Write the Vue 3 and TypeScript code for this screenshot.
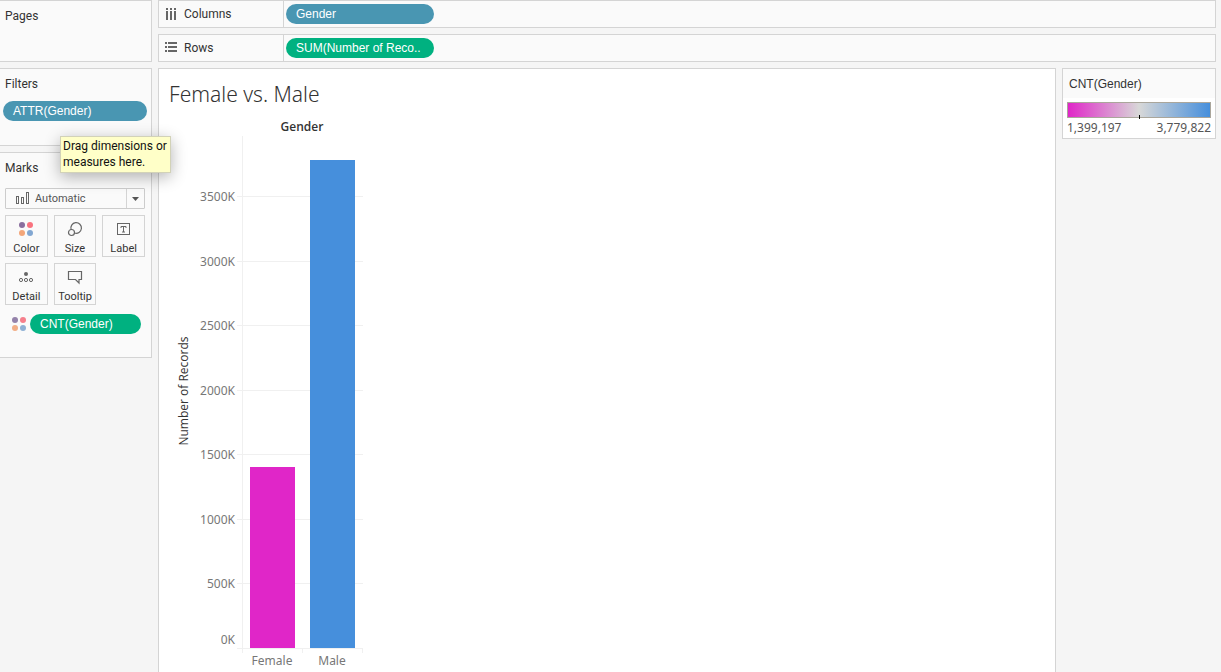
<script setup lang="ts">
import { ref } from 'vue'

interface Bar { label: string; value: number; color: string }

const markType = ref('Automatic')
const bars: Bar[] = [
  { label: 'Female', value: 1399197, color: '#e026c8' },
  { label: 'Male', value: 3779822, color: '#468fdc' },
]
const ticks = [0, 500, 1000, 1500, 2000, 2500, 3000, 3500]

const baseline = 538
const unitsPerPixel = 7752
const axisX = 73
const step = 60
const barWidth = 45

const barHeight = (value: number): number => Math.ceil(value / unitsPerPixel)
const tickY = (tick: number): number => baseline - Math.ceil((tick * 1000) / unitsPerPixel)
const labelY = (tick: number): number => (tick === 0 ? baseline - 4 : tickY(tick) + 5)
</script>

<template>
  <div class="workspace">
    <aside class="side">
      <section class="panel pages">
        <h2>Pages</h2>
      </section>
      <section class="panel filters">
        <h2>Filters</h2>
        <button type="button" class="pill blue">ATTR(Gender)</button>
        <div class="tooltip" role="tooltip">Drag dimensions or<br />measures here.</div>
      </section>
      <section class="panel marks">
        <h2>Marks</h2>
        <div class="mark-type">
          <svg class="type-icon" width="14" height="14" viewBox="0 0 14 14" aria-hidden="true">
            <g fill="none" stroke="#666">
              <rect x=".5" y="4.5" width="2" height="7" />
              <rect x="5.5" y="5.5" width="2" height="6" />
              <rect x="10.5" y=".5" width="2" height="11" />
            </g>
          </svg>
          <select v-model="markType" aria-label="Mark type">
            <option>Automatic</option>
            <option>Bar</option>
            <option>Line</option>
          </select>
          <svg class="arrow" width="7" height="4" viewBox="0 0 7 4" aria-hidden="true"><path d="M0 0h7L3.5 4z" fill="#555" /></svg>
        </div>
        <div class="cards">
          <button type="button">
            <svg width="16" height="16" viewBox="0 0 16 16" aria-hidden="true">
              <circle cx="4" cy="4" r="3" fill="#8a6f9e" /><circle cx="12" cy="4" r="3" fill="#f9737f" />
              <circle cx="4" cy="12" r="3" fill="#f3a67a" /><circle cx="12" cy="12" r="3" fill="#82a7d2" />
            </svg>
            Color
          </button>
          <button type="button">
            <svg width="16" height="16" viewBox="0 0 16 16" fill="none" stroke="#666" stroke-width="1.2" aria-hidden="true">
              <path d="M4.1 8.6A5.3 5.3 0 1 1 7.5 12" /><circle cx="4.5" cy="11.5" r="3" />
            </svg>
            Size
          </button>
          <button type="button">
            <svg width="16" height="16" viewBox="0 0 16 16" fill="none" stroke="#666" aria-hidden="true">
              <rect x="1.5" y="2.5" width="12" height="11" /><path d="M5 7V5.5h5V7M7.5 5.5V11M6 11h3" />
            </svg>
            Label
          </button>
          <button type="button">
            <svg width="16" height="16" viewBox="0 0 16 16" aria-hidden="true">
              <circle cx="8" cy="5" r="2" fill="#666" />
              <g fill="none" stroke="#666"><circle cx="3" cy="11" r="1.6" /><circle cx="8" cy="11" r="1.6" /><circle cx="13" cy="11" r="1.6" /></g>
            </svg>
            Detail
          </button>
          <button type="button">
            <svg width="16" height="16" viewBox="0 0 16 16" fill="none" stroke="#666" stroke-width="1.2" aria-hidden="true">
              <path d="M1.5 2.5h13v8h-2.500v3.500L8.500 10.500h-7z" />
            </svg>
            Tooltip
          </button>
        </div>
        <div class="encoding">
          <svg width="16" height="16" viewBox="0 0 16 16" aria-hidden="true">
            <circle cx="4" cy="4" r="3" fill="#9482aa" /><circle cx="12" cy="4" r="3" fill="#f67f8c" />
            <circle cx="4" cy="12" r="3" fill="#f2ae86" /><circle cx="12" cy="12" r="3" fill="#8eb0d5" />
          </svg>
          <button type="button" class="pill green">CNT(Gender)</button>
        </div>
      </section>
    </aside>

    <main class="content">
      <section class="shelf">
        <h2>
          <svg width="12" height="12" viewBox="0 0 12 12" fill="#666" aria-hidden="true">
            <path d="M1 0h2v2H1zM5 0h2v2H5zM9 0h2v2H9zM1 3h2v9H1zM5 3h2v9H5zM9 3h2v9H9z" />
          </svg>
          Columns
        </h2>
        <button type="button" class="pill blue">Gender</button>
      </section>
      <section class="shelf">
        <h2>
          <svg width="12" height="12" viewBox="0 0 12 12" fill="#666" aria-hidden="true">
            <path d="M0 0h2v2H0zM0 4h2v2H0zM0 8h2v2H0zM3 0h9v2H3zM3 4h9v2H3zM3 8h9v2H3z" />
          </svg>
          Rows
        </h2>
        <button type="button" class="pill green">SUM(Number of Reco..</button>
      </section>
      <div class="view">
        <article class="sheet">
          <h1>Female vs. Male</h1>
          <svg class="chart" width="210" height="560" viewBox="0 0 210 560" role="img" aria-label="Number of Records by Gender">
            <text class="heading" x="133" y="21" text-anchor="middle">Gender</text>
            <text class="heading axis" transform="translate(19 281) rotate(-90)" text-anchor="middle">Number of Records</text>
            <g stroke="#f0f0f0">
              <path :d="`M${axisX + .5} 26V${baseline + 5}`" />
              <path v-for="t in ticks" :key="t" :d="`M${axisX - 5} ${tickY(t) + .5}h126`" />
              <path v-for="i in 2" :key="i" :d="`M${axisX + i * step + .5} ${baseline}v5`" />
            </g>
            <text v-for="t in ticks" :key="t" x="66" :y="labelY(t)" text-anchor="end">{{ t }}K</text>
            <g v-for="(b, i) in bars" :key="b.label">
              <rect :x="axisX + 8 + i * step" :y="baseline - barHeight(b.value)" :width="barWidth" :height="barHeight(b.value)" :fill="b.color" />
              <text :x="axisX + 30 + i * step" :y="baseline + 17" text-anchor="middle">{{ b.label }}</text>
            </g>
          </svg>
        </article>
        <aside class="legend">
          <h2>CNT(Gender)</h2>
          <div class="ramp"></div>
          <div class="range"><span>1,399,197</span><span>3,779,822</span></div>
        </aside>
      </div>
    </main>
  </div>
</template>

<style>
body { margin: 0; background: #f5f5f5; }
</style>

<style scoped>
.workspace {
  display: grid;
  grid-template-columns: 152px minmax(0, 1fr);
  gap: 6px;
  box-sizing: border-box;
  height: 100vh;
  padding-right: 5px;
  overflow: hidden;
  background: #f5f5f5;
  color: #333;
  font: 12px/16px Roboto, "Liberation Sans", sans-serif;
}
.workspace *, .workspace *::before { box-sizing: border-box; }
h1, h2 { margin: 0; font-weight: 400; }
h2 { font-size: 12px; line-height: 16px; }
button, select { font: inherit; color: inherit; }

.side { display: flex; flex-direction: column; gap: 6px; }
.panel { border: 1px solid #d4d4d4; border-left: 0; background: #fafafa; padding: 7px 6px 0 5px; }
.pages { height: 62px; }
.filters { position: relative; height: 78px; padding: 7px 4px 0 3px; }
.filters h2 { padding-left: 2px; margin-bottom: 9px; }
.marks { height: 206px; }

.pill {
  display: block;
  height: 20px;
  padding: 0 10px;
  border: 0;
  border-radius: 10px;
  color: #fff;
  text-align: left;
  white-space: nowrap;
}
.pill, .legend h2 { font-family: "Liberation Sans", Arial, sans-serif; }
.blue { background: #4996b2; }
.green { background: #00b180; }
.filters .pill { width: 100%; }

.tooltip {
  position: absolute;
  z-index: 2;
  left: 60px;
  top: 67px;
  padding: 1px 3px 2px 2px;
  border: 1px solid #d2d2b8;
  background: #ffffc8;
  box-shadow: 0 4px 16px rgba(0, 0, 0, .3);
  color: #111;
  white-space: nowrap;
}

.mark-type { display: flex; align-items: center; position: relative; margin-top: 12px; height: 21px; }
.type-icon { position: absolute; left: 11px; pointer-events: none; }
.mark-type select {
  appearance: none;
  width: 100%;
  height: 21px;
  padding: 0 24px 0 29px;
  border: 1px solid #ccc;
  border-radius: 1px;
  background: linear-gradient(#d4d4d4, #d4d4d4) right 17px top / 1px 100% no-repeat #fafafa;
  color: #555;
  font-size: 11px;
}
.arrow { position: absolute; right: 6px; pointer-events: none; }
.cards { display: grid; grid-template-columns: repeat(3, 1fr); gap: 6px; margin-top: 6px; }
.cards button {
  display: flex;
  flex-direction: column;
  align-items: center;
  gap: 5px;
  height: 42px;
  padding: 5px 0 0;
  border: 1px solid #d4d4d4;
  background: #fafafa;
  font-size: 11px;
  line-height: 14px;
}
.encoding { display: flex; align-items: center; gap: 3px; margin-top: 9px; padding: 0 4px 0 6px; }
.encoding .pill { flex: 1; }

.content { display: flex; flex-direction: column; gap: 6px; min-width: 0; }
.shelf { display: flex; align-items: center; gap: 2px; height: 28px; flex: none; border: 1px solid #d4d4d4; background: #fafafa; }
.shelf h2 { display: flex; align-items: center; gap: 7px; width: 125px; height: 100%; padding-left: 6px; border-right: 1px solid #d4d4d4; }
.shelf .pill { width: 148px; }

.view { display: flex; align-items: flex-start; gap: 6px; flex: 1; min-height: 0; }
.sheet { flex: 1; align-self: stretch; min-width: 0; overflow: hidden; border: 1px solid #d4d4d4; border-bottom: 0; background: #fff; padding: 10px 10px 0; }
h1 { height: 31px; color: #333; font: 300 21px/30px "Noto Sans", "Open Sans", sans-serif; }
.chart { display: block; }
.chart text { fill: #777; font: 12px "Noto Sans", sans-serif; }
.chart .heading { fill: #333; font-family: "Open Sans", "Noto Sans", sans-serif; font-weight: 600; }
.chart .axis { font-weight: 500; }

.legend { width: 154px; flex: none; border: 1px solid #d4d4d4; background: #fff; }
.legend h2 { height: 29px; padding: 7px 6px; background: #fafafa; }
.ramp { position: relative; height: 16px; margin: 4px 4px 0; border: 1px solid #aaa69b; background: linear-gradient(90deg, #e026c8, #d8d8d8, #468fdc); }
.ramp::before { content: ""; position: absolute; left: 50%; top: 12px; width: 1px; height: 4px; background: #000; }
.range { display: flex; justify-content: space-between; padding: 1px 4px; color: #555; font: 12px/18px "Noto Sans", sans-serif; }
</style>
